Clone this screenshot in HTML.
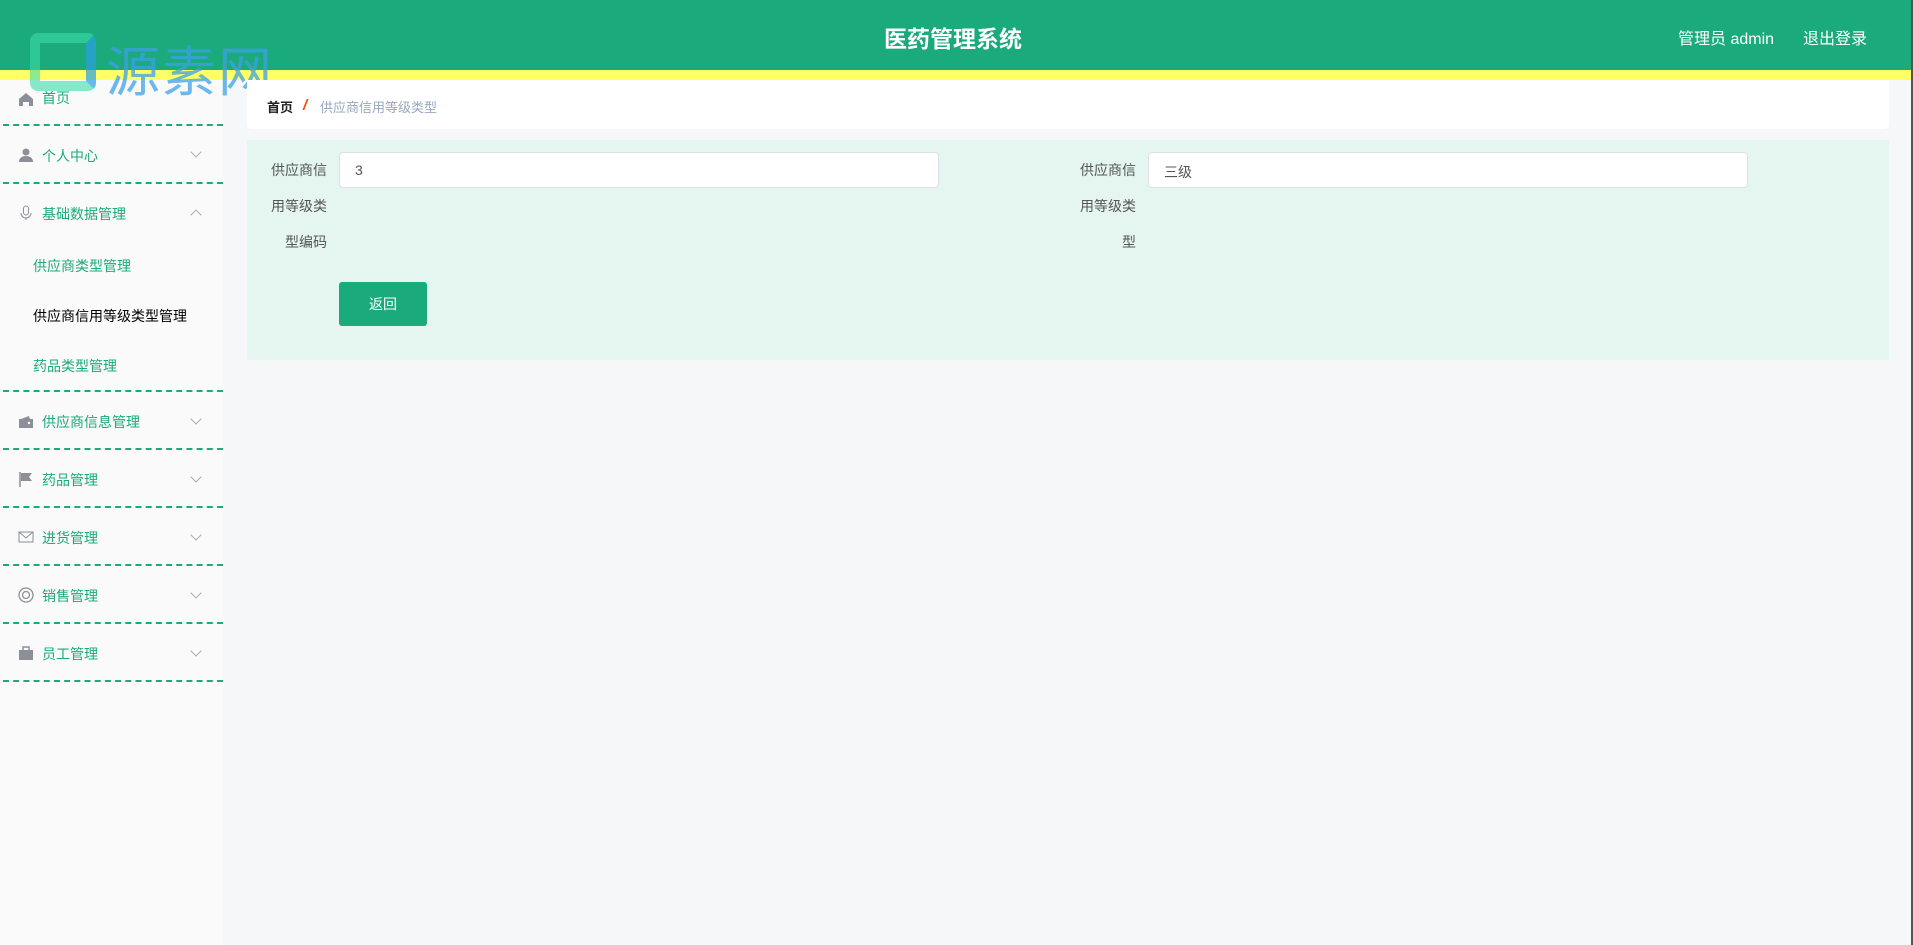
<!DOCTYPE html>
<html><head><meta charset="utf-8"><style>
*{margin:0;padding:0;box-sizing:border-box}
body{width:1913px;height:945px;overflow:hidden;background:#f5f7f9;font-family:"Liberation Sans","Noto Sans CJK SC",sans-serif;position:relative}
.hd{position:absolute;left:0;top:0;width:1913px;height:70px;background:#1baa7b}
.yl{position:absolute;left:0;top:70px;width:1913px;height:10px;background:#ffff66}
.title{position:absolute;left:0;width:1906px;top:20px;text-align:center;color:#fff;font-size:23px;font-weight:bold}
.usr{position:absolute;top:25px;color:#fff;font-size:16px}
.sb{position:absolute;left:0;top:80px;width:223px;height:865px;background:#fafafa}
.it{position:absolute;left:0;width:223px;font-size:14px;color:#1baa7b;margin-top:-1px}
.dash{position:absolute;left:3px;width:220px;border-top:2px dashed #1baa7b}
.ic{position:absolute;left:18px;width:16px;height:16px}
.chev{position:absolute;left:192px;width:8px;height:8px;border-right:1px solid #aaa;border-bottom:1px solid #aaa;transform:rotate(45deg)}
.bc{position:absolute;left:247px;top:80px;width:1642px;height:49px;background:#fff;border-radius:0 0 4px 4px}
.panel{position:absolute;left:247px;top:140px;width:1642px;height:220px;background:#e5f6f0}
.lbl{position:absolute;font-size:14px;color:#555;text-align:right;width:90px}
.inp{position:absolute;height:36px;background:#fff;border:1px solid #dcdfe6;border-radius:4px;font-size:14px;color:#555;padding:9px 15px}
.btn{position:absolute;left:339px;top:282px;width:88px;height:44px;background:#1baa7b;border-radius:3px;color:#fff;font-size:14px;text-align:center;line-height:44px}
</style></head><body>
<div class="hd"></div><div class="yl"></div>
<div class="title">医药管理系统</div>
<div class="usr" style="left:1678px">管理员 admin</div>
<div class="usr" style="left:1803px">退出登录</div>
<div class="sb">
<div class="it" style="top:9px;left:42px;color:#1baa7b">首页</div>
<svg class="ic" style="top:11px" viewBox="0 0 16 16"><path d="M1 8L8 2l7 6v7h-4v-4H5v4H1z" fill="#8c8f98"/></svg>
<div class="dash" style="top:44px"></div>
<svg class="ic" style="top:67px" viewBox="0 0 16 16"><circle cx="8" cy="5" r="3.5" fill="#8c8f98"/><path d="M1 15c0-4 3-6 7-6s7 2 7 6z" fill="#8c8f98"/></svg>
<div class="it" style="top:67px;left:42px">个人中心</div><div class="chev" style="top:68px"></div>
<div class="dash" style="top:102px"></div>
<svg class="ic" style="top:125px" viewBox="0 0 16 16"><rect x="5.5" y="1" width="5" height="9" rx="2.5" fill="none" stroke="#8c8f98"/><path d="M3 8a5 5 0 0 0 10 0M8 13v2" fill="none" stroke="#8c8f98"/></svg>
<div class="it" style="top:125px;left:42px">基础数据管理</div><div class="chev" style="top:131px;transform:rotate(225deg)"></div>
<div class="it" style="top:177px;left:33px">供应商类型管理</div>
<div class="it" style="top:227px;left:33px;color:#000">供应商信用等级类型管理</div>
<div class="it" style="top:277px;left:33px">药品类型管理</div>
<div class="dash" style="top:310px"></div>
<svg class="ic" style="top:334px" viewBox="0 0 16 16"><path d="M1 5h14v9H1z" fill="#8c8f98"/><path d="M3 5l8-3 1 3" fill="#8c8f98"/><circle cx="11" cy="9" r="1.2" fill="#fff"/></svg>
<div class="it" style="top:333px;left:42px">供应商信息管理</div><div class="chev" style="top:335px"></div>
<div class="dash" style="top:368px"></div>
<svg class="ic" style="top:391px" viewBox="0 0 16 16"><path d="M2 1v15" stroke="#8c8f98" stroke-width="1.5"/><path d="M3 2h11l-3 4 3 4H3z" fill="#8c8f98"/></svg>
<div class="it" style="top:391px;left:42px">药品管理</div><div class="chev" style="top:393px"></div>
<div class="dash" style="top:426px"></div>
<svg class="ic" style="top:449px" viewBox="0 0 16 16"><rect x="1" y="3" width="14" height="10" fill="none" stroke="#8c8f98"/><path d="M1 3l7 6 7-6" fill="none" stroke="#8c8f98"/></svg>
<div class="it" style="top:449px;left:42px">进货管理</div><div class="chev" style="top:451px"></div>
<div class="dash" style="top:484px"></div>
<svg class="ic" style="top:507px" viewBox="0 0 16 16"><circle cx="8" cy="8" r="7" fill="none" stroke="#8c8f98" stroke-width="1.3"/><circle cx="8" cy="8" r="3.5" fill="none" stroke="#8c8f98" stroke-width="1.3"/></svg>
<div class="it" style="top:507px;left:42px">销售管理</div><div class="chev" style="top:509px"></div>
<div class="dash" style="top:542px"></div>
<svg class="ic" style="top:565px" viewBox="0 0 16 16"><path d="M5 5V2h6v3" fill="none" stroke="#8c8f98" stroke-width="1.5"/><rect x="1" y="5" width="14" height="10" fill="#8c8f98"/></svg>
<div class="it" style="top:565px;left:42px">员工管理</div><div class="chev" style="top:567px"></div>
<div class="dash" style="top:600px"></div>
</div>
<div style="position:absolute;left:30px;top:33px;width:66px;height:58px;border:10px solid rgba(60,220,170,.6);border-radius:8px;border-right-color:rgba(40,160,230,.7)"></div>
<div style="position:absolute;left:106px;top:28px;font-size:54px;color:rgba(60,160,230,.75);letter-spacing:2px">源素网</div>
<div class="bc"></div>
<div style="position:absolute;left:267px;top:97px;font-size:13px;font-weight:bold;color:#222">首页</div>
<div style="position:absolute;left:303px;top:97px;font-size:15px;color:#ff4400;font-weight:bold;font-style:italic">/</div>
<div style="position:absolute;left:320px;top:97px;font-size:13px;color:#97a8be">供应商信用等级类型</div>
<div class="panel"></div>
<div class="lbl" style="left:237px;top:159px;line-height:22px">供应商信</div>
<div class="lbl" style="left:237px;top:195px;line-height:22px">用等级类</div>
<div class="lbl" style="left:237px;top:231px;line-height:22px">型编码</div>
<div class="inp" style="left:339px;top:152px;width:600px">3</div>
<div class="lbl" style="left:1046px;top:159px;line-height:22px">供应商信</div>
<div class="lbl" style="left:1046px;top:195px;line-height:22px">用等级类</div>
<div class="lbl" style="left:1046px;top:231px;line-height:22px">型</div>
<div class="inp" style="left:1148px;top:152px;width:600px">三级</div>
<div class="btn">返回</div>
<div style="position:absolute;left:1911px;top:0;width:2px;height:945px;background:#555"></div>
</body></html>
